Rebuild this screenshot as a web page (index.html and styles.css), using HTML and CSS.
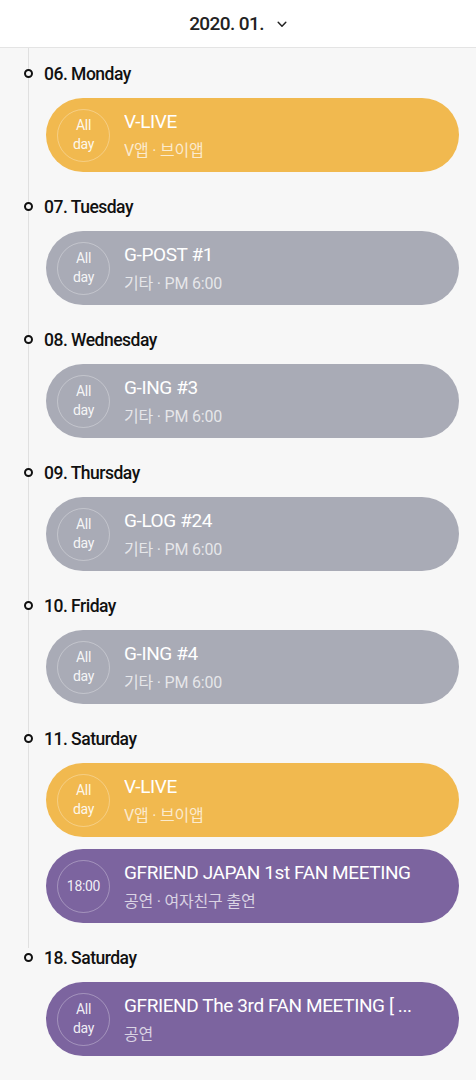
FILE: index.html
```html
<!DOCTYPE html>
<html lang="ko">
<head>
    <meta charset="UTF-8">
    <meta name="viewport" content="width=device-width, initial-scale=1.0">
    <title>Schedule</title>
    <link rel="stylesheet" href="styles.css">
</head>
<body>

    <!-- En-tete : mois -->
    <header class="top">
        <span class="month">2020. 01.</span>
        <svg class="chevron" width="10" height="7" viewBox="0 0 10 7"><path d="M1.2 1.3 L5 5.2 L8.8 1.3" fill="none" stroke="#222" stroke-width="1.5" stroke-linecap="round" stroke-linejoin="round"/></svg>
    </header>

    <!-- Liste des jours -->
    <main class="timeline">

        <section class="day">
            <h2 class="day-label">06. Monday</h2>
            <div class="event vlive">
                <div class="when">All<br>day</div>
                <div class="info">
                    <div class="title">V-LIVE</div>
                    <div class="sub">V앱 · 브이앱</div>
                </div>
            </div>
        </section>

        <section class="day">
            <h2 class="day-label">07. Tuesday</h2>
            <div class="event etc">
                <div class="when">All<br>day</div>
                <div class="info">
                    <div class="title">G-POST #1</div>
                    <div class="sub">기타 · PM 6:00</div>
                </div>
            </div>
        </section>

        <section class="day">
            <h2 class="day-label">08. Wednesday</h2>
            <div class="event etc">
                <div class="when">All<br>day</div>
                <div class="info">
                    <div class="title">G-ING #3</div>
                    <div class="sub">기타 · PM 6:00</div>
                </div>
            </div>
        </section>

        <section class="day">
            <h2 class="day-label">09. Thursday</h2>
            <div class="event etc">
                <div class="when">All<br>day</div>
                <div class="info">
                    <div class="title">G-LOG #24</div>
                    <div class="sub">기타 · PM 6:00</div>
                </div>
            </div>
        </section>

        <section class="day">
            <h2 class="day-label">10. Friday</h2>
            <div class="event etc">
                <div class="when">All<br>day</div>
                <div class="info">
                    <div class="title">G-ING #4</div>
                    <div class="sub">기타 · PM 6:00</div>
                </div>
            </div>
        </section>

        <section class="day">
            <h2 class="day-label">11. Saturday</h2>
            <div class="event vlive">
                <div class="when">All<br>day</div>
                <div class="info">
                    <div class="title">V-LIVE</div>
                    <div class="sub">V앱 · 브이앱</div>
                </div>
            </div>
            <div class="event show">
                <div class="when">18:00</div>
                <div class="info">
                    <div class="title">GFRIEND JAPAN 1st FAN MEETING</div>
                    <div class="sub">공연 · 여자친구 출연</div>
                </div>
            </div>
        </section>

        <section class="day">
            <h2 class="day-label">18. Saturday</h2>
            <div class="event show">
                <div class="when">All<br>day</div>
                <div class="info">
                    <div class="title">GFRIEND The 3rd FAN MEETING [ ...</div>
                    <div class="sub">공연</div>
                </div>
            </div>
        </section>

    </main>

</body>
</html>
```

FILE: styles.css
```css
/* Style général */
body {
    margin: 0;
    padding: 0;
    background-color: #f7f7f7;
    font-family: Roboto, "Noto Sans", "Noto Sans CJK KR", sans-serif;
    color: #111;
}

/* En-tete */
.top {
    height: 47px;
    background-color: #fff;
    border-bottom: 1px solid #e4e4e4;
    display: flex;
    align-items: center;
    justify-content: center;
    gap: 13px;
}

.month {
    font-size: 19px;
    font-weight: 500;
    letter-spacing: -0.6px;
    color: #222;
}

.chevron {
    margin-top: 2px;
}

/* Ligne verticale */
.timeline {
    position: relative;
    padding: 16px 17px 0 0;
}

.timeline::before {
    content: "";
    position: absolute;
    left: 28px;
    top: 0;
    bottom: 0;
    width: 1px;
    background-color: #e0e0e0;
}

.day {
    margin-bottom: 25px;
}

/* Pas de ligne sous le dernier jour */
.day:last-child {
    position: relative;
    margin-bottom: 0;
    padding-bottom: 30px;
    background-color: #f7f7f7;
}

.day-label {
    position: relative;
    margin: 0 0 14px 44px;
    font-size: 17.5px;
    line-height: 20px;
    font-weight: 500;
    letter-spacing: -0.5px;
    color: #111;
}

/* Petit rond */
.day-label::before {
    content: "";
    position: absolute;
    left: -20px;
    top: 5px;
    width: 5px;
    height: 5px;
    border: 2px solid #111;
    border-radius: 50%;
    background-color: #f7f7f7;
}

/* Evenements */
.event {
    margin-left: 46px;
    height: 74px;
    border-radius: 37px;
    display: flex;
    align-items: center;
    padding-left: 11px;
    color: #fff;
}

.event + .event {
    margin-top: 12px;
}

.vlive {
    background-color: #f1b94f;
}

.etc {
    background-color: #a9abb6;
}

.show {
    background-color: #7c649f;
}

.when {
    width: 51px;
    height: 51px;
    flex: none;
    border: 1px solid rgba(255, 255, 255, 0.3);
    border-radius: 50%;
    display: flex;
    align-items: center;
    justify-content: center;
    text-align: center;
    font-size: 14px;
    line-height: 19px;
    color: rgba(255, 255, 255, 0.9);
    letter-spacing: -0.3px;
}

.info {
    margin-left: 14px;
    padding-top: 2px;
    white-space: nowrap;
    overflow: hidden;
}

.title {
    font-size: 19px;
    line-height: 24px;
    letter-spacing: -0.4px;
}

.sub {
    margin-top: 6px;
    font-size: 16px;
    line-height: 22px;
    letter-spacing: -0.2px;
    color: rgba(255, 255, 255, 0.72);
}
```
